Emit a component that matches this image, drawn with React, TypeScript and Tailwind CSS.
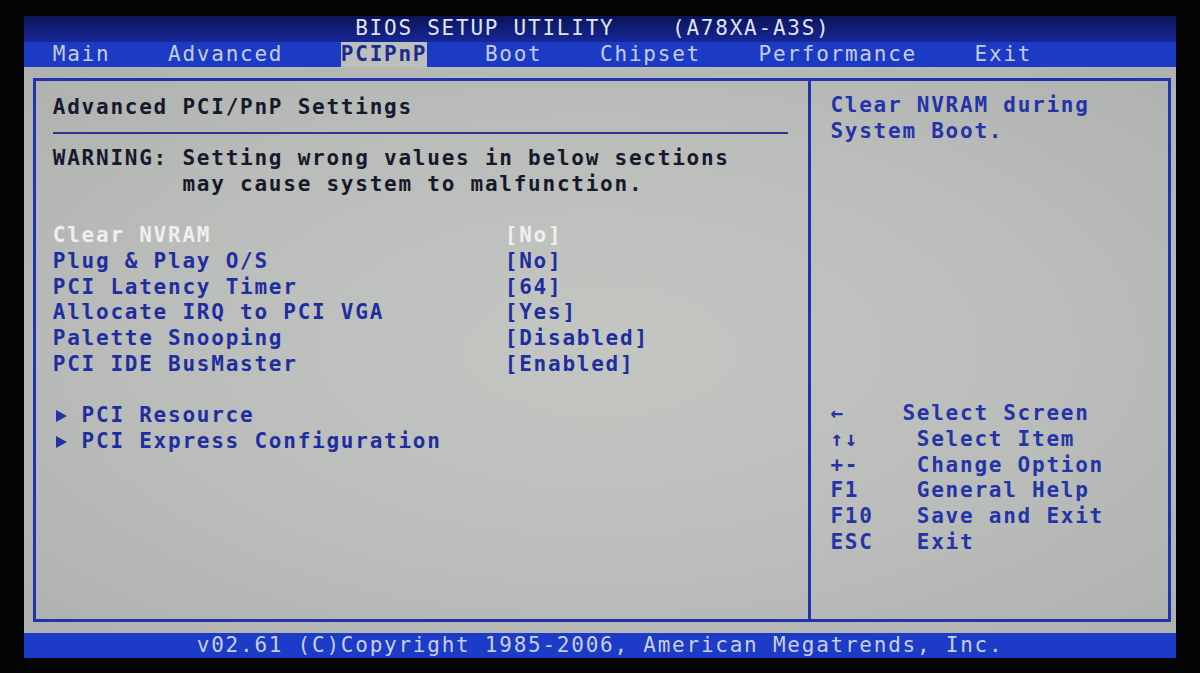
import React from "react";

// One character cell of the 80x25 text mode: 14.4px wide, 25.7px tall.
const font = "font-['DejaVu_Sans_Mono',monospace] text-[21px] tracking-[1.76px]";
const row = "h-[25.7px] leading-[25.7px] whitespace-pre";

const items: { label: string; value: string; active?: boolean }[] = [
  { label: "Clear NVRAM", value: "[No]", active: true },
  { label: "Plug & Play O/S", value: "[No]" },
  { label: "PCI Latency Timer", value: "[64]" },
  { label: "Allocate IRQ to PCI VGA", value: "[Yes]" },
  { label: "Palette Snooping", value: "[Disabled]" },
  { label: "PCI IDE BusMaster", value: "[Enabled]" },
];

const keys: { key: string; text: string; w: string }[] = [
  { key: "←", text: "Select Screen", w: "w-[72px]" },
  { key: "↑↓", text: "Select Item", w: "w-[86.4px]" },
  { key: "+-", text: "Change Option", w: "w-[86.4px]" },
  { key: "F1", text: "General Help", w: "w-[86.4px]" },
  { key: "F10", text: "Save and Exit", w: "w-[86.4px]" },
  { key: "ESC", text: "Exit", w: "w-[86.4px]" },
];

function Triangle() {
  return (
    <span className="inline-flex w-[28.8px] h-[25.7px] items-center">
      <svg width="11" height="12" viewBox="0 0 11 12" className="ml-[3px]">
        <path d="M0 0 L11 6 L0 12 Z" fill="#2233a4" />
      </svg>
    </span>
  );
}

export default function App() {
  return (
    <div className={`w-[1200px] h-[673px] bg-[#050507] pt-[16px] pl-[24px] ${font}`}>
      <div className="w-[1152px] flex flex-col">
        {/* title bar */}
        <div
          className={`${row} bg-[linear-gradient(to_bottom,#0b1458,#172796)] text-[#dfe3f2] pl-[331.2px]`}
        >
          {"BIOS SETUP UTILITY    (A78XA-A3S)"}
        </div>

        {/* menu tabs */}
        <div className={`${row} bg-[#1b3bc4] text-[#c6cbe0] pl-[28.8px] flex`}>
          <span>{"Main    Advanced    "}</span>
          <span className="bg-[#bcbfbb] text-[#1a2a90] font-bold">PCIPnP</span>
          <span>{"    Boot    Chipset    Performance    Exit"}</span>
        </div>

        {/* body */}
        <div className="h-[565.4px] bg-[radial-gradient(ellipse_at_center,#c4c6c2_0%,#b9bcb8_60%,#aeb1ad_100%)] pt-[11px] pl-[9px] pr-[5px] pb-[11px]">
          <div className="h-full border-[3px] border-[#2233b0] flex">
            {/* settings pane */}
            <div className="w-[772px] pl-[16.8px] pt-[13.5px] font-bold">
              <div className={`${row} text-[#16192c]`}>Advanced PCI/PnP Settings</div>
              <div className="h-[25.7px] flex items-center">
                <div className="w-[735px] h-[2px] bg-[#2a358e]" />
              </div>
              <div className={`${row} text-[#16192c]`}>
                {"WARNING: Setting wrong values in below sections"}
              </div>
              <div className={`${row} text-[#16192c]`}>
                {"         may cause system to malfunction."}
              </div>
              <div className="h-[25.7px]" />
              {items.map((it) => (
                <div
                  key={it.label}
                  className={`${row} flex ${it.active ? "text-[#eef0f0]" : "text-[#1e2ea0]"}`}
                >
                  <span className="w-[452px]">{it.label}</span>
                  <span>{it.value}</span>
                </div>
              ))}
              <div className="h-[25.7px]" />
              <div className={`${row} flex text-[#1e2ea0]`}>
                <Triangle />
                <span>PCI Resource</span>
              </div>
              <div className={`${row} flex text-[#1e2ea0]`}>
                <Triangle />
                <span>PCI Express Configuration</span>
              </div>
            </div>

            {/* help pane */}
            <div className="flex-1 border-l-[3px] border-[#2233b0] pl-[19.4px] pt-[11.6px] font-bold text-[#2434a8]">
              <div className={row}>Clear NVRAM during</div>
              <div className={row}>System Boot.</div>
              <div className="h-[257px]" />
              {keys.map((k) => (
                <div key={k.key} className={`${row} flex`}>
                  <span className={k.w}>{k.key}</span>
                  <span>{k.text}</span>
                </div>
              ))}
            </div>
          </div>
        </div>

        {/* footer */}
        <div className={`${row} bg-[#1c3bc6] text-[#c9cee2] pl-[172.8px]`}>
          {"v02.61 (C)Copyright 1985-2006, American Megatrends, Inc."}
        </div>
      </div>
    </div>
  );
}
